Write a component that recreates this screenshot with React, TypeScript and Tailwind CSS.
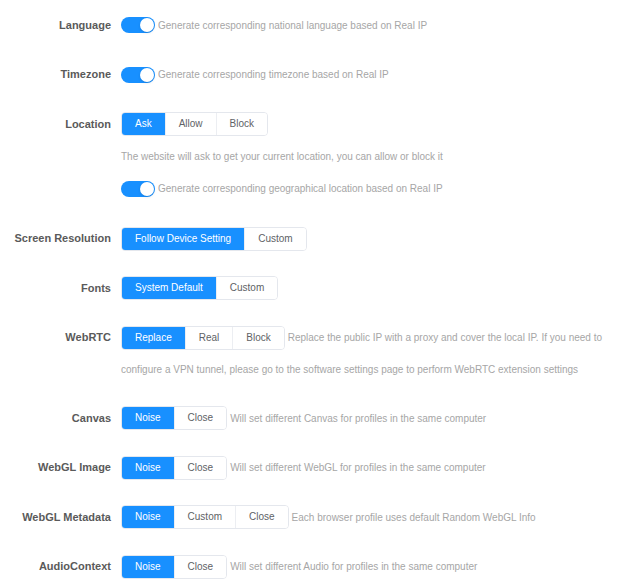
import { ReactNode } from "react";

function Toggle({ text }: { text: string }) {
  return (
    <div className="flex items-center h-[32px]">
      <span className="relative inline-block w-[34px] h-[16px] rounded-full bg-[#1890ff] shrink-0">
        <span className="absolute top-[1px] right-[1px] w-[14px] h-[14px] rounded-full bg-white shadow-sm" />
      </span>
      <span className="ml-[3px] text-[10px] text-[#a6a6a6]">{text}</span>
    </div>
  );
}

function Segments({ items, active = 0 }: { items: string[]; active?: number }) {
  return (
    <span className="inline-flex shrink-0 h-[24px] leading-none rounded-[4px] border border-[#e4e7ed] overflow-hidden">
      {items.map((item, i) => (
        <span
          key={item}
          className={
            i === active
              ? "flex items-center px-[13px] text-[10px] bg-[#1890ff] text-white"
              : "flex items-center px-[13px] text-[10px] text-[#606266] bg-white border-l border-[#eceef2]"
          }
        >
          {item}
        </span>
      ))}
    </span>
  );
}

function Row({ label, children }: { label: string; children: ReactNode }) {
  return (
    <div className="flex">
      <div className="w-[111px] shrink-0 h-[32px] flex items-center justify-end text-[11px] font-bold text-[#5a5a5a]">
        {label}
      </div>
      <div className="ml-[10px] flex-1 min-w-0">{children}</div>
    </div>
  );
}

function SegRow({ label, items, desc }: { label: string; items: string[]; desc?: string }) {
  return (
    <Row label={label}>
      <div className="flex items-center h-[32px]">
        <Segments items={items} />
        {desc && <span className="ml-[3px] text-[10px] text-[#a6a6a6] whitespace-nowrap">{desc}</span>}
      </div>
    </Row>
  );
}

export default function App() {
  return (
    <div className="w-[629px] min-h-[588px] bg-white pt-[9px] pr-[22px] font-['Liberation_Sans',Arial,sans-serif]">
      <div className="flex flex-col gap-[17.5px]">
        <Row label="Language">
          <Toggle text="Generate corresponding national language based on Real IP" />
        </Row>
        <Row label="Timezone">
          <Toggle text="Generate corresponding timezone based on Real IP" />
        </Row>
        <Row label="Location">
          <div className="flex items-center h-[32px]">
            <Segments items={["Ask", "Allow", "Block"]} />
          </div>
          <div className="flex items-center h-[32px] text-[10px] text-[#a6a6a6]">
            The website will ask to get your current location, you can allow or block it
          </div>
          <div className="h-[33px] flex items-center">
            <Toggle text="Generate corresponding geographical location based on Real IP" />
          </div>
        </Row>
        <SegRow label="Screen Resolution" items={["Follow Device Setting", "Custom"]} />
        <SegRow label="Fonts" items={["System Default", "Custom"]} />
        <Row label="WebRTC">
          <div className="text-[10px] text-[#a6a6a6]">
            <div className="flex items-center h-[32px]">
              <Segments items={["Replace", "Real", "Block"]} />
              <span className="ml-[3px] whitespace-nowrap">
                Replace the public IP with a proxy and cover the local IP. If you need to
              </span>
            </div>
            <div className="flex items-center h-[31px]">
              configure a VPN tunnel, please go to the software settings page to perform WebRTC extension settings
            </div>
          </div>
        </Row>
        <SegRow
          label="Canvas"
          items={["Noise", "Close"]}
          desc="Will set different Canvas for profiles in the same computer"
        />
        <SegRow
          label="WebGL Image"
          items={["Noise", "Close"]}
          desc="Will set different WebGL for profiles in the same computer"
        />
        <SegRow
          label="WebGL Metadata"
          items={["Noise", "Custom", "Close"]}
          desc="Each browser profile uses default Random WebGL Info"
        />
        <SegRow
          label="AudioContext"
          items={["Noise", "Close"]}
          desc="Will set different Audio for profiles in the same computer"
        />
      </div>
    </div>
  );
}
